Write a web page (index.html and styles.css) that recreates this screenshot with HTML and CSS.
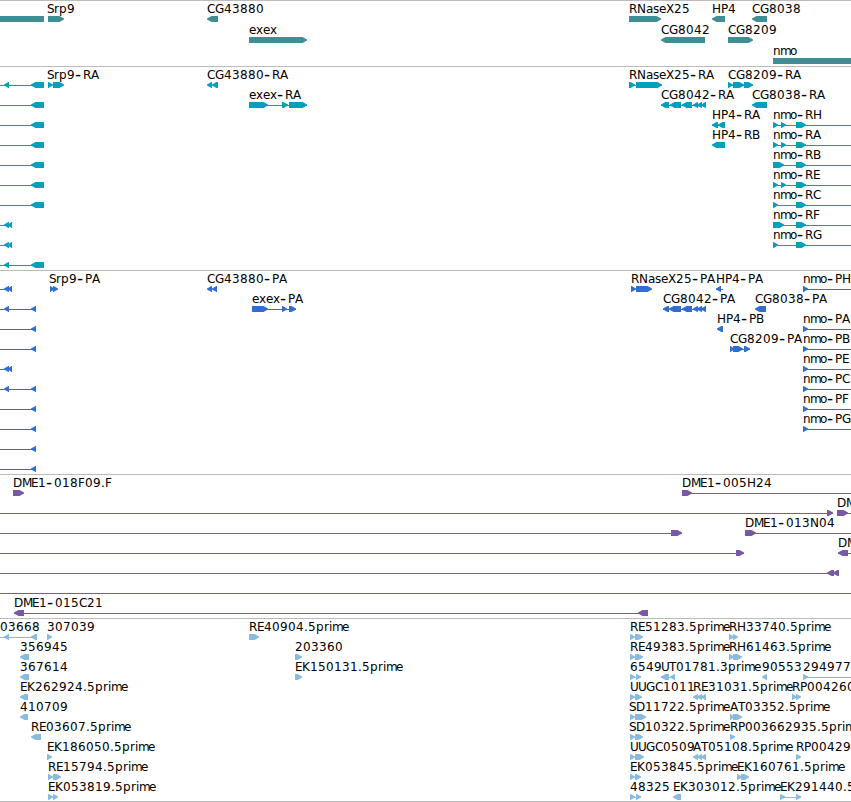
FILE: index.html
```html
<!DOCTYPE html>
<html lang="en">
  <head>
    <meta charset="UTF-8" />
    <meta name="viewport" content="width=device-width, initial-scale=1.0" />
    <title>Genome tracks</title>
    <link rel="stylesheet" href="styles.css" />
  </head>
  <body>
    <main class="browser">
      <section class="track genes"></section>
      <section class="track transcripts"></section>
      <section class="track proteins"></section>
      <section class="track clones"></section>
      <section class="track ests"></section>
    </main>
    <script src="tracks.js"></script>
  </body>
</html>
```

FILE: styles.css
```css
body {
  margin: 0;
  background: #fff;
  overflow: hidden;
}

.browser {
  display: flex;
  flex-direction: column;
  border-bottom: 1px solid #bbb;
}

.track {
  border-top: 1px solid #bbb;
}

.track svg {
  display: block;
  width: 100%;
  height: 100%;
  overflow: visible;
}

.track text {
  font-family: "DejaVu Sans", sans-serif;
  font-size: 12px;
  fill: #000;
}

/* hyphens are drawn wider than the font's own */
.track .dash {
  font-size: 17px;
}

/* heights leave out the separator line */
.genes {
  height: 65px;
  fill: #3f8e94;
}

.transcripts {
  height: 203px;
  fill: #009fc0;
}

.proteins {
  height: 203px;
  fill: #306fd0;
}

.clones {
  height: 143px;
  fill: #7759a8;
}

.ests {
  height: 182px;
  fill: #88bbdd;
}
```

FILE: tracks.js
```js
const NS = "http://www.w3.org/2000/svg";

// whole pixel advances of the label glyphs
const ADVANCE = {
  ".": 4, "-": 8, A: 8, C: 8, D: 9, E: 7, F: 7, G: 9, H: 9, K: 8, M: 9,
  N: 9, P: 7, R: 8, S: 7, T: 7, U: 8, X: 8,
  a: 7, e: 7, i: 3, m: 10, n: 7, o: 7, p: 8, r: 5, s: 6, x: 7,
};

// each item: [label, label x, direction, exons, line start, line end]
const R = 1;
const L = -1;
const END = 851;
const tri = [[4, 9]];
const end3 = [[31, 44]];
const pair = [[4, 9], [8, 12]];

const longLeft = ["", 0, L, end3, 0, 44];
const bothLeft = ["", 0, L, [[4, 9], [31, 44]], 0, 44];
const shortLeft = ["", 0, L, pair, 0, 12];
const protLeft = ["", 0, L, [[31, 36]], 0, 36];
const protBoth = ["", 0, L, [...tri, [31, 36]], 0, 36];

const nmoThree = [[773, 778], [781, 786], [796, 806]];
const nmoWide = [[773, 784], [796, 806]];
const nmoTwo = [[773, 778], [796, 806]];
const nmo = (name, exons) => ["nmo-" + name, 773, R, exons, 773, END];
const nmoP = (name) => ["nmo-" + name, 803, R, [[803, 808]], 803, END];

const tracks = {
  genes: {
    pitch: 21,
    rows: [
      [
        ["", 0, 0, [[0, 44]]],
        ["Srp9", 47, R, [[48, 64]]],
        ["CG43880", 207, L, [[207, 218]]],
        ["RNaseX25", 629, R, [[629, 661]]],
        ["HP4", 712, L, [[712, 725]]],
        ["CG8038", 752, L, [[752, 767]]],
      ],
      [
        ["exex", 249, R, [[249, 307]]],
        ["CG8042", 661, L, [[661, 705]]],
        ["CG8209", 728, R, [[728, 753]]],
      ],
      [["nmo", 773, 0, [[773, 851]]]],
    ],
  },
  transcripts: {
    pitch: 20,
    rows: [
      [
        bothLeft,
        ["Srp9-RA", 47, R, [[48, 53], [53, 64]]],
        ["CG43880-RA", 207, L, [[207, 212], [212, 218]]],
        ["RNaseX25-RA", 629, R, [[629, 635], [636, 662]], 629, 662],
        ["CG8209-RA", 728, R, [[728, 733], [733, 744], [744, 753]], 728, 753],
      ],
      [
        longLeft,
        ["exex-RA", 249, R, [[249, 268], [282, 288], [289, 307]], 249, 307],
        ["CG8042-RA", 661, L, [[661, 669], [670, 681], [682, 692], [693, 698], [697, 702], [701, 706]], 661, 706],
        ["CG8038-RA", 752, L, [[752, 767]]],
      ],
      [longLeft, ["HP4-RA", 712, L, [[712, 718], [718, 725]], 712, 724], nmo("RH", nmoThree)],
      [longLeft, ["HP4-RB", 712, L, [[712, 725]]], nmo("RA", nmoThree)],
      [longLeft, nmo("RB", nmoWide)],
      [longLeft, nmo("RE", nmoThree)],
      [longLeft, nmo("RC", nmoTwo)],
      [shortLeft, nmo("RF", nmoWide)],
      [shortLeft, nmo("RG", nmoTwo)],
      [bothLeft],
    ],
  },
  proteins: {
    pitch: 20,
    rows: [
      [
        shortLeft,
        ["Srp9-PA", 49, R, [[50, 54], [53, 58]]],
        ["CG43880-PA", 207, L, [[207, 212], [212, 217]]],
        ["RNaseX25-PA", 631, R, [[631, 636], [636, 652]]],
        ["HP4-PA", 716, L, [[716, 721]], 716, 723],
        nmoP("PH"),
      ],
      [
        protBoth,
        ["exex-PA", 252, R, [[252, 268], [282, 287], [289, 296]], 252, 296],
        ["CG8042-PA", 663, L, [[663, 669], [669, 681], [682, 692], [693, 698], [697, 702], [701, 706]], 663, 706],
        ["CG8038-PA", 755, L, [[755, 766]]],
      ],
      [protLeft, ["HP4-PB", 717, L, [[717, 723]]], nmoP("PA")],
      [protLeft, ["CG8209-PA", 730, R, [[730, 734], [733, 743], [744, 750]], 730, 750], nmoP("PB")],
      [shortLeft, nmoP("PE")],
      [protBoth, nmoP("PC")],
      [protLeft, nmoP("PF")],
      [protLeft, nmoP("PG")],
      [protLeft],
      [protLeft],
    ],
  },
  clones: {
    pitch: 20,
    rows: [
      [
        ["DME1-018F09.F", 13, R, [[13, 24]]],
        ["DME1-005H24", 682, R, [[682, 692]], 682, END],
      ],
      [
        ["", 0, R, [[827, 833]], 0, 833],
        ["DM", 837, R, [[837, 848]], 837, END],
      ],
      [
        ["", 0, R, [[671, 682]], 0, 682],
        ["DME1-013N04", 745, R, [[745, 756]], 745, END],
      ],
      [
        ["", 0, R, [[736, 744]], 0, 744],
        ["DM", 838, L, [[838, 848]], 838, END],
      ],
      [["", 0, L, [[827, 834], [833, 839]], 0, 839]],
      [["", 0, R, [], 0, END]],
      [["DME1-015C21", 14, L, [[14, 24], [638, 648]], 14, 648]],
    ],
  },
  ests: {
    pitch: 20,
    rows: [
      [
        ["03668", 0, L, [[4, 9], [31, 37]], 0, 37],
        ["307039", 47, R, [[47, 52]]],
        ["RE40904.5prime", 249, R, [[249, 259]]],
        ["RE51283.5prime", 630, R, [[630, 635], [635, 643]]],
        ["RH33740.5prime", 729, R, [[729, 734], [733, 738]]],
      ],
      [
        ["356945", 20, L, [[20, 29]]],
        ["203360", 295, R, [[295, 302]]],
        ["RE49383.5prime", 630, R, [[630, 635], [635, 643]]],
        ["RH61463.5prime", 729, R, [[729, 734], [733, 742]]],
      ],
      [
        ["367614", 20, L, [[20, 29]]],
        ["EK150131.5prime", 295, R, [[295, 302]]],
        ["6549", 630, R, [[630, 635], [636, 641]], 630, 641],
        ["UT01781.3prime", 661, L, [[661, 669], [670, 675]], 661, 675],
        ["90553", 762, L, [[762, 767]]],
        ["294977", 803, R, [[803, 808]], 803, END],
      ],
      [
        ["EK262924.5prime", 20, L, [[20, 28]]],
        ["UUGC1011", 630, R, [[630, 635], [635, 642]]],
        ["RE31031.5prime", 693, L, [[693, 698], [697, 702], [701, 706]]],
        ["RP004260", 792, R, [[792, 797], [796, 801]]],
      ],
      [
        ["410709", 20, L, [[20, 28]]],
        ["SD11722.5prime", 629, R, [[630, 635], [635, 646]]],
        ["AT03352.5prime", 730, R, [[730, 734], [733, 742]]],
      ],
      [
        ["RE03607.5prime", 31, L, [[31, 41]]],
        ["SD10322.5prime", 629, R, [[630, 635], [635, 643]]],
        ["RP003662935.5prime", 730, R, [[730, 735]]],
      ],
      [
        ["EK186050.5prime", 47, R, [[47, 52]]],
        ["UUGC0509", 630, R, [[630, 635], [635, 644]]],
        ["AT05108.5prime", 693, L, [[693, 698], [697, 702], [701, 706]]],
        ["RP00429", 796, R, [[796, 801]]],
      ],
      [
        ["RE15794.5prime", 48, R, [[48, 53], [53, 61]]],
        ["EK053845.5prime", 630, R, [[630, 635], [635, 641]]],
        ["EK160761.5prime", 737, R, [[737, 742], [741, 749]]],
      ],
      [
        ["EK053819.5prime", 48, R, [[48, 53], [53, 58]]],
        ["48325", 630, R, [[630, 635], [636, 641]], 630, 641],
        ["EK303012.5prime", 673, L, [[673, 681]]],
        ["EK291440.5prime", 780, R, [[780, 785], [796, 801]], 780, 801],
      ],
    ],
  },
};

function add(parent, tag, attrs) {
  const node = document.createElementNS(NS, tag);
  for (const key in attrs) node.setAttribute(key, attrs[key]);
  parent.appendChild(node);
  return node;
}

function exonPath(x1, x2, dir, top) {
  const bottom = top + 6;
  const mid = top + 3;
  const head = Math.min(5, x2 - x1);
  if (dir === R) {
    return `M${x1} ${top}H${x2 - head + 0.5}L${x2} ${mid - 0.4}V${mid + 0.4}L${x2 - head + 0.5} ${bottom}H${x1}Z`;
  }
  if (dir === L) {
    return `M${x2} ${top}H${x1 + head - 0.5}L${x1} ${mid - 0.4}V${mid + 0.4}L${x1 + head - 0.5} ${bottom}H${x2}Z`;
  }
  return `M${x1} ${top}H${x2}V${bottom}H${x1}Z`;
}

function drawLabel(svg, label, x, y) {
  const text = add(svg, "text", {});
  for (const part of label.split(/(-)/)) {
    const xs = [];
    for (const ch of part) {
      xs.push(x);
      x += ADVANCE[ch] || 8;
    }
    const attrs = { x: xs.join(" "), y };
    if (part === "-") {
      attrs.class = "dash";
      attrs.y = y + 1;
    }
    add(text, "tspan", attrs).textContent = part;
  }
}

for (const name in tracks) {
  const { pitch, rows } = tracks[name];
  const svg = add(document.querySelector("." + name), "svg", {});
  rows.forEach((row, i) => {
    const top = 15 + i * pitch;
    for (const [label, x, dir, exons, from, to] of row) {
      if (to) add(svg, "rect", { x: from, y: top + 3, width: to - from, height: 1 });
      for (const [x1, x2] of exons) {
        add(svg, "path", { d: exonPath(x1, x2, dir, top) });
      }
      if (label) drawLabel(svg, label, x, top - 3);
    }
  });
}
```
